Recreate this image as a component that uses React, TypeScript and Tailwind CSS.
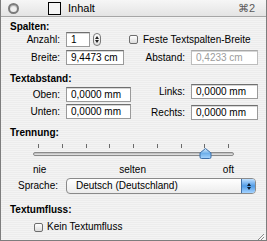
import React from "react";

const font = { fontFamily: '"Liberation Sans", Arial, sans-serif' };

function Field({ value, w, disabled }: { value: string; w: string; disabled?: boolean }) {
  return (
    <div
      className={`${w} h-[15px] bg-white border border-[#9a9a9a] border-t-[#6f6f6f] shadow-[inset_0_1px_0_#d6d6d6] pl-[4px] flex items-center text-[10px] leading-none ${
        disabled ? "text-[#9c9c9c] border-[#bdbdbd] border-t-[#a8a8a8]" : "text-black"
      }`}
    >
      {value}
    </div>
  );
}

function Label({ text, w = "w-[59px]" }: { text: string; w?: string }) {
  return <div className={`${w} text-right text-[10px] leading-none text-black shrink-0`}>{text}</div>;
}

function Checkbox() {
  return (
    <div className="w-[9px] h-[9px] rounded-[2px] border border-[#6e6e6e] bg-gradient-to-b from-[#ffffff] to-[#dcdcdc] shrink-0" />
  );
}

export default function App() {
  const ticks = [0, 1, 2, 3, 4, 5, 6, 7, 8];
  return (
    <div
      style={font}
      className="w-[267px] h-[241px] flex flex-col border-x border-b border-[#7d7d7d] overflow-hidden select-none bg-[repeating-linear-gradient(180deg,#ececec_0px,#ececec_1px,#f3f3f3_1px,#f3f3f3_2px)]"
    >
      {/* title bar */}
      <div className="h-[17px] shrink-0 flex items-center bg-gradient-to-b from-[#f6f6f6] to-[#e4e4e4] border-b border-[#a6a6a6]">
        <div className="ml-[7px] w-[11px] h-[11px] rounded-full border-[2px] border-[#7c7c7c] bg-[#f0f0f0] shadow-[inset_0_1px_1px_#aaa]" />
        <div className="ml-[29px] w-[13px] h-[13px] border border-black bg-[#f4f4f4]" />
        <div className="ml-[7px] text-[11px] leading-none text-black">Inhalt</div>
        <div className="ml-auto mr-[11px] text-[11px] leading-none text-[#5a5a5a]">⌘2</div>
      </div>

      {/* Spalten */}
      <div className="pl-[9px] mt-[5px] h-[10px] text-[10px] font-bold leading-none text-black">Spalten:</div>
      <div className="flex items-center h-[15px]">
        <Label text="Anzahl:" />
        <div className="ml-[6px]">
          <Field value="1" w="w-[24px]" />
        </div>
        <div className="ml-[3px] w-[8px] h-[13px] rounded-[4px] border border-[#7a7a7a] bg-gradient-to-b from-[#ffffff] to-[#e0e0e0] flex flex-col items-center justify-center gap-[1px]">
          <svg width="4" height="3" viewBox="0 0 4 3"><path d="M0 3 L2 0 L4 3 Z" fill="#222" /></svg>
          <svg width="4" height="3" viewBox="0 0 4 3"><path d="M0 0 L2 3 L4 0 Z" fill="#222" /></svg>
        </div>
        <div className="ml-[28px]">
          <Checkbox />
        </div>
        <div className="ml-[5px] text-[10px] leading-none text-black">Feste Textspalten-Breite</div>
      </div>
      <div className="mt-[3px] flex items-center h-[15px]">
        <Label text="Breite:" />
        <div className="ml-[6px]">
          <Field value="9,4473 cm" w="w-[58px]" />
        </div>
        <Label text="Abstand:" w="w-[61px]" />
        <div className="ml-[6px]">
          <Field value="0,4233 cm" w="w-[67px]" disabled />
        </div>
      </div>

      {/* Textabstand */}
      <div className="pl-[9px] mt-[9px] h-[10px] text-[10px] font-bold leading-none text-black">Textabstand:</div>
      <div className="flex h-[36px]">
        <div className="flex flex-col gap-[2px] pt-[3px]">
          <div className="flex items-center h-[15px]">
            <Label text="Oben:" />
            <div className="ml-[6px]">
              <Field value="0,0000 mm" w="w-[65px]" />
            </div>
          </div>
          <div className="flex items-center h-[15px]">
            <Label text="Unten:" />
            <div className="ml-[6px]">
              <Field value="0,0000 mm" w="w-[65px]" />
            </div>
          </div>
        </div>
        <div className="flex flex-col gap-[6px]">
          <div className="flex items-center h-[15px]">
            <Label text="Links:" w="w-[54px]" />
            <div className="ml-[6px]">
              <Field value="0,0000 mm" w="w-[67px]" />
            </div>
          </div>
          <div className="flex items-center h-[15px]">
            <Label text="Rechts:" w="w-[54px]" />
            <div className="ml-[6px]">
              <Field value="0,0000 mm" w="w-[67px]" />
            </div>
          </div>
        </div>
      </div>

      {/* Trennung */}
      <div className="pl-[9px] mt-[8px] h-[10px] text-[10px] font-bold leading-none text-black">Trennung:</div>
      <div className="ml-[32px] w-[201px] mt-[6px] relative">
        <div className="flex justify-between px-[5px] h-[4px]">
          {ticks.map((t) => (
            <div key={t} className="w-px h-[4px] bg-[#6a6a6a]" />
          ))}
        </div>
        <div className="mt-[4px] h-[4px] rounded-full border border-[#8a8a8a] bg-gradient-to-b from-[#b8b8b8] to-[#e8e8e8]" />
        <svg className="absolute left-[166px] top-[4px]" width="13" height="11" viewBox="0 0 13 11">
          <defs>
            <linearGradient id="th" x1="0" y1="0" x2="0" y2="1">
              <stop offset="0" stopColor="#d8ecff" />
              <stop offset="0.5" stopColor="#6fb0ea" />
              <stop offset="1" stopColor="#a9d6ff" />
            </linearGradient>
          </defs>
          <path d="M6.5 0.5 L12 5 L12 9 Q12 10.5 10.5 10.5 L2.5 10.5 Q1 10.5 1 9 L1 5 Z" fill="url(#th)" stroke="#3d6fa8" strokeWidth="1" />
        </svg>
        <div className="mt-[9px] h-[10px] flex justify-between text-[10px] leading-none text-black">
          <span>nie</span>
          <span className="-ml-[4px]">selten</span>
          <span>oft</span>
        </div>
      </div>
      <div className="mt-[3px] flex items-center h-[16px]">
        <Label text="Sprache:" w="w-[57px]" />
        <div className="ml-[8px] w-[190px] h-[16px] rounded-[4px] border border-[#8a8a8a] bg-gradient-to-b from-[#ffffff] to-[#ececec] flex items-center overflow-hidden">
          <div className="flex-1 pl-[9px] text-[10px] leading-none text-black">Deutsch (Deutschland)</div>
          <div className="w-[14px] h-full bg-gradient-to-b from-[#bfe0ff] via-[#4f9be6] to-[#a4d3ff] border-l border-[#4070a8] flex flex-col items-center justify-center gap-[1px]">
            <svg width="4" height="3" viewBox="0 0 4 3"><path d="M0 3 L2 0 L4 3 Z" fill="#0c1a2c" /></svg>
            <svg width="4" height="3" viewBox="0 0 4 3"><path d="M0 0 L2 3 L4 0 Z" fill="#0c1a2c" /></svg>
          </div>
        </div>
      </div>

      {/* Textumfluss */}
      <div className="pl-[9px] mt-[11px] h-[10px] text-[10px] font-bold leading-none text-black">Textumfluss:</div>
      <div className="mt-[7px] pl-[33px] h-[10px] flex items-center gap-[4px]">
        <Checkbox />
        <div className="text-[10px] leading-none text-black">Kein Textumfluss</div>
      </div>

      <div className="flex-1 flex items-end justify-end">
        <svg width="11" height="11" viewBox="0 0 11 11" className="mb-[1px] mr-[1px]">
          <path d="M10 2 L2 10 M10 5 L5 10 M10 8 L8 10" stroke="#8a8a8a" strokeWidth="1" />
          <path d="M10.5 3 L3 10.5 M10.5 6 L6 10.5 M10.5 9 L9 10.5" stroke="#ffffff" strokeWidth="1" />
        </svg>
      </div>
    </div>
  );
}
